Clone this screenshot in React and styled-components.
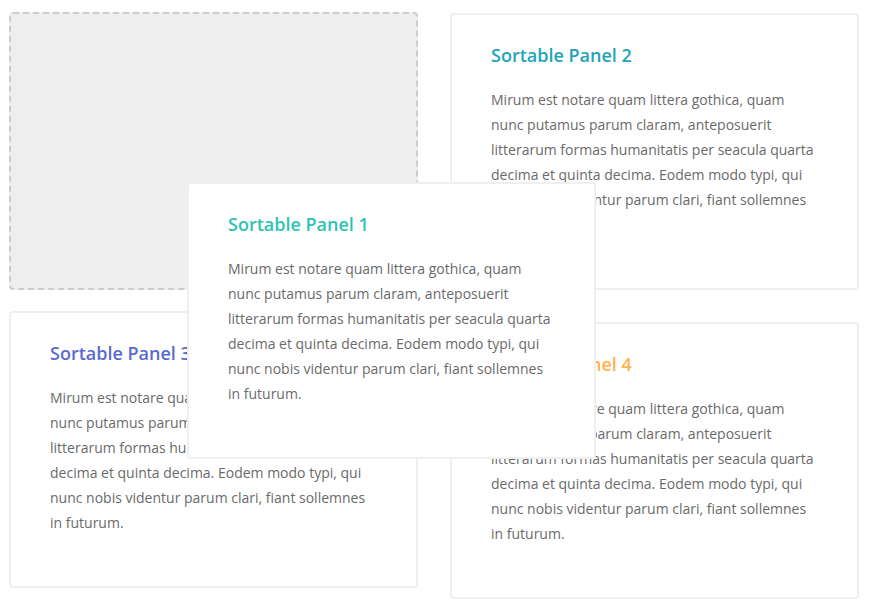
import React from "react";
import styled, { createGlobalStyle } from "styled-components";

const GlobalStyle = createGlobalStyle`
  html, body {
    margin: 0;
    padding: 0;
    background: #fff;
  }
  body {
    font-family: "Open Sans", "Noto Sans", sans-serif;
    -webkit-font-smoothing: antialiased;
  }
`;

const TEXT =
  "Mirum est notare quam littera gothica, quam nunc putamus parum claram, anteposuerit litterarum formas humanitatis per seacula quarta decima et quinta decima. Eodem modo typi, qui nunc nobis videntur parum clari, fiant sollemnes in futurum.";

const Panel = ({ title, color }) => (
  <Card>
    <Title $color={color}>{title}</Title>
    <Text>{TEXT}</Text>
  </Card>
);

const App = () => {
  return (
    <>
      <GlobalStyle />
      <Board>
        <Column $gap={21}>
          <Placeholder />
          <Panel title="Sortable Panel 3" color="#5b69d0" />
        </Column>
        <Column $gap={32} $offset={1}>
          <Panel title="Sortable Panel 2" color="#21a4b8" />
          <Panel title="Sortable Panel 4" color="#ffb24c" />
        </Column>
        <Dragging>
          <Panel title="Sortable Panel 1" color="#2dc3b4" />
        </Dragging>
      </Board>
    </>
  );
};

export default App;

// Styled Components
const Board = styled.div`
  position: relative;
  display: grid;
  grid-template-columns: 409px 409px;
  column-gap: 32px;
  padding: 12px 0 0 9px;
`;

const Column = styled.div`
  display: flex;
  flex-direction: column;
  gap: ${(p) => p.$gap}px;
  padding-top: ${(p) => p.$offset || 0}px;
`;

const Card = styled.div`
  box-sizing: border-box;
  background: #fff;
  border: 2px solid #efefef;
  border-radius: 4px;
  padding: 30px 39px 51px;
`;

const Placeholder = styled.div`
  box-sizing: border-box;
  height: 278px;
  background: #eeeeee;
  border: 2px dashed #cccccc;
  border-radius: 4px;
`;

const Dragging = styled.div`
  position: absolute;
  left: 187px;
  top: 182px;
  width: 409px;
  z-index: 10;
`;

const Title = styled.h3`
  margin: 0 0 22px;
  font-size: 18px;
  line-height: 20px;
  font-weight: 600;
  color: ${(p) => p.$color};
`;

const Text = styled.p`
  margin: 0;
  font-size: 14px;
  line-height: 25px;
  color: #6a6a6a;
`;
